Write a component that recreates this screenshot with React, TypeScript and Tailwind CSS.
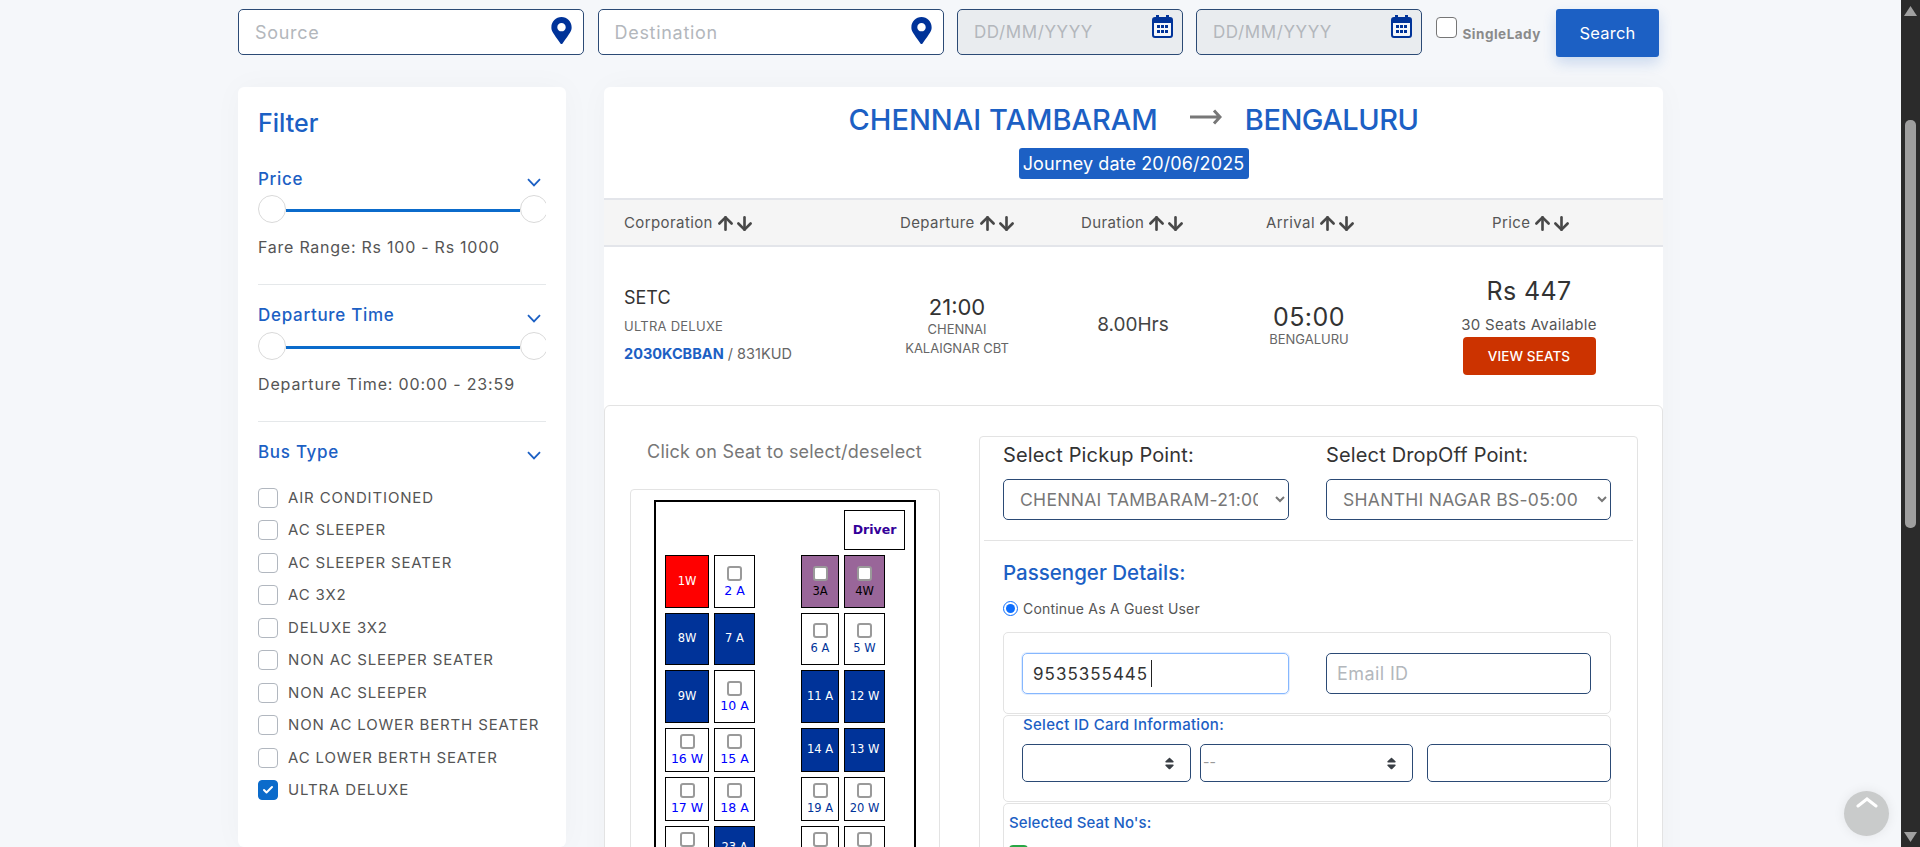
import { ArrowDown, ArrowUp, Check } from "lucide-react";
import { FaMapMarkerAlt, FaSort } from "react-icons/fa";

type SeatKind = "free" | "sold" | "booked" | "lady";

type SeatData = {
	label: string;
	kind: SeatKind;
	small?: boolean;
};

const busTypes = [
	"AIR CONDITIONED",
	"AC SLEEPER",
	"AC SLEEPER SEATER",
	"AC 3X2",
	"DELUXE 3X2",
	"NON AC SLEEPER SEATER",
	"NON AC SLEEPER",
	"NON AC LOWER BERTH SEATER",
	"AC LOWER BERTH SEATER",
	"ULTRA DELUXE",
];

// rows go left pair, then right pair
const seatRows: { height: string; seats: SeatData[] }[] = [
	{
		height: "h-[53px]",
		seats: [
			{ label: "1W", kind: "booked" },
			{ label: "2 A", kind: "free" },
			{ label: "3A", kind: "lady", small: true },
			{ label: "4W", kind: "lady", small: true },
		],
	},
	{
		height: "h-[52px]",
		seats: [
			{ label: "8W", kind: "sold" },
			{ label: "7 A", kind: "sold" },
			{ label: "6 A", kind: "free", small: true },
			{ label: "5 W", kind: "free", small: true },
		],
	},
	{
		height: "h-[53px]",
		seats: [
			{ label: "9W", kind: "sold" },
			{ label: "10 A", kind: "free" },
			{ label: "11 A", kind: "sold" },
			{ label: "12 W", kind: "sold" },
		],
	},
	{
		height: "h-[44px]",
		seats: [
			{ label: "16 W", kind: "free" },
			{ label: "15 A", kind: "free" },
			{ label: "14 A", kind: "sold" },
			{ label: "13 W", kind: "sold" },
		],
	},
	{
		height: "h-[44px]",
		seats: [
			{ label: "17 W", kind: "free" },
			{ label: "18 A", kind: "free" },
			{ label: "19 A", kind: "free", small: true },
			{ label: "20 W", kind: "free", small: true },
		],
	},
	{
		height: "h-[44px]",
		seats: [
			{ label: "24 W", kind: "free" },
			{ label: "23 A", kind: "sold" },
			{ label: "22 A", kind: "free", small: true },
			{ label: "21 W", kind: "free", small: true },
		],
	},
];

function CalendarIcon() {
	return (
		<svg width="21" height="23" viewBox="0 0 21 23" className="absolute right-[10px] top-[6px]">
			<rect x="4" y="0" width="3" height="5" fill="#003399" />
			<rect x="14" y="0" width="3" height="5" fill="#003399" />
			<rect x="1" y="3" width="19" height="19" rx="2" fill="#f4f6fa" stroke="#003399" strokeWidth="2" />
			<rect x="1" y="3" width="19" height="5" fill="#003399" />
			<g fill="#003399">
				<rect x="5" y="10" width="3" height="3" />
				<rect x="9" y="10" width="3" height="3" />
				<rect x="13" y="10" width="3" height="3" />
				<rect x="5" y="15" width="3" height="3" />
				<rect x="9" y="15" width="3" height="3" />
				<rect x="13" y="15" width="3" height="3" />
			</g>
		</svg>
	);
}

function PlaceInput({ placeholder }: { placeholder: string }) {
	return (
		<div className="relative w-[346px]">
			<input
				placeholder={placeholder}
				className="h-[46px] w-full rounded-[5px] border border-[#2b4a75] bg-white pl-[16px] text-[18px] tracking-[0.7px] placeholder:text-[#b3b7bc]"
			/>
			<FaMapMarkerAlt className="absolute right-[9px] top-[8px] text-[#003399]" size={27} />
		</div>
	);
}

function DateInput() {
	return (
		<div className="relative w-[226px]">
			<input
				placeholder="DD/MM/YYYY"
				readOnly
				className="h-[46px] w-full rounded-[5px] border border-[#2b4a75] bg-[#e9ecef] pl-[16px] text-[17px] tracking-[0.6px] placeholder:text-[#b3b7bc]"
			/>
			<CalendarIcon />
		</div>
	);
}

function Chevron() {
	return (
		<svg width="14" height="9" viewBox="0 0 14 9" fill="none" stroke="#1c60c4" strokeWidth="1.8">
			<path d="M1 1.2 L7 7.4 L13 1.2" />
		</svg>
	);
}

function FilterHeading({ title }: { title: string }) {
	return (
		<div className="flex h-[24px] items-center justify-between pr-[5px]">
			<span className="text-[17px] font-medium leading-[24px] tracking-[0.7px] text-[#1c60c4]">{title}</span>
			<span className="mt-[6px] flex">
				<Chevron />
			</span>
		</div>
	);
}

function RangeSlider() {
	return (
		<div className="flex h-[28px] items-center overflow-hidden">
			<span className="h-[28px] w-[28px] shrink-0 rounded-full border border-[#d9d9d9] bg-white" />
			<span className="mt-[2px] h-[3px] flex-1 bg-[#0b6bcb]" />
			<span className="mr-[-2px] h-[28px] w-[28px] shrink-0 rounded-full border border-[#d9d9d9] bg-white" />
		</div>
	);
}

function BusTypeRow({ label, checked }: { label: string; checked: boolean }) {
	return (
		<label className="flex h-[32.5px] items-center">
			<span className="relative flex h-[20px] w-[20px] shrink-0">
				<input
					type="checkbox"
					defaultChecked={checked}
					className="h-[20px] w-[20px] appearance-none rounded-[4px] border border-[#b1b7bf] bg-white checked:border-[#0b6bcb] checked:bg-[#0b6bcb]"
				/>
				{checked && <Check className="absolute left-[4px] top-[4px] text-white" size={12} strokeWidth={4} />}
			</span>
			<span className="ml-[10px] whitespace-nowrap text-[15px] tracking-[0.85px] text-[#555]">{label}</span>
		</label>
	);
}

function SortHead({ label }: { label: string }) {
	return (
		<div className="mt-[1px] flex items-center">
			<span className="text-[15px] tracking-[0.4px] text-[#555]">{label}</span>
			<span className="ml-[3px] flex text-[#484848]">
				<ArrowUp size={21} strokeWidth={3} className="-mx-[1px]" />
				<ArrowDown size={21} strokeWidth={3} className="-mx-[1px]" />
			</span>
		</div>
	);
}

function Seat({ seat }: { seat: SeatData }) {
	const fontSize = seat.small ? "text-[11.5px]" : "text-[12.5px]";
	if (seat.kind === "sold" || seat.kind === "booked") {
		const bg = seat.kind === "booked" ? "bg-[#ff0000]" : "bg-[#003399]";
		return (
			<div className={`flex h-full items-center justify-center border border-black text-[11.5px] text-white ${bg}`}>
				{seat.label}
			</div>
		);
	}
	const bg = seat.kind === "lady" ? "bg-[#996699]" : "bg-white";
	let color = seat.small ? "text-[#003399]" : "text-[#0000ff]";
	if (seat.kind === "lady") color = "text-black";
	return (
		<div className={`flex h-full flex-col items-center justify-center border border-black ${bg}`}>
			<input
				type="checkbox"
				className="h-[15px] w-[15px] shrink-0 appearance-none rounded-[3px] border-2 border-[#9a9a9a] bg-white"
			/>
			<span className={`mt-[3px] leading-[14px] ${fontSize} ${color}`}>{seat.label}</span>
		</div>
	);
}

function SeatMap() {
	return (
		<div className="mt-[25px] h-[400px] w-[310px] rounded-[4px] border border-[#e3e3e3] pl-[23px] pt-[10px]">
			<div className="h-[400px] w-[262px] border-2 border-black pl-[9px] pt-[8px] font-['DejaVu_Sans',sans-serif]">
				<div className="ml-[179px] flex h-[40px] w-[61px] items-center justify-center border border-black text-[12.5px] font-bold text-[#330099]">
					Driver
				</div>
				<div className="mt-[5px] flex flex-col gap-[5px]">
					{seatRows.map((row) => (
						<div
							key={row.seats[0].label}
							className={`grid grid-cols-[44px_41px_36px_38px_41px] gap-x-[5px] ${row.height}`}
						>
							<Seat seat={row.seats[0]} />
							<Seat seat={row.seats[1]} />
							<span />
							<Seat seat={row.seats[2]} />
							<Seat seat={row.seats[3]} />
						</div>
					))}
				</div>
			</div>
		</div>
	);
}

function IdSelect({ width, margin, value }: { width: string; margin: string; value?: string }) {
	return (
		<div className={`relative h-[38px] shrink-0 rounded-[5px] border border-[#2b4a75] bg-white ${width} ${margin}`}>
			{value && <span className="ml-[2px] text-[14px] leading-[34px] text-[#999]">{value}</span>}
			<FaSort className="absolute right-[13px] top-[11px] text-[#3a3f45]" size={15} />
		</div>
	);
}

function PassengerPanel() {
	return (
		<div className="ml-[40px] mt-[30px] h-[500px] w-[659px] rounded-[4px] border border-[#e3e3e3]">
			<div className="px-[23px] pt-[4px]">
				<div className="grid grid-cols-[286px_285px] gap-x-[37px]">
					<span className="text-[20px] leading-[28px] tracking-[0.15px] text-[#333]">Select Pickup Point:</span>
					<span className="text-[20px] leading-[28px] tracking-[0.15px] text-[#333]">Select DropOff Point:</span>
					<select className="mt-[10px] h-[41px] w-full rounded-[5px] border border-[#2b4a75] bg-white pl-[12px] pr-[14px] text-[17.5px] tracking-[0.3px] text-[#777]">
						<option>CHENNAI TAMBARAM-21:00</option>
					</select>
					<select className="mt-[10px] h-[41px] w-full rounded-[5px] border border-[#2b4a75] bg-white pl-[12px] pr-[4px] text-[17.5px] tracking-[0.3px] text-[#777]">
						<option>SHANTHI NAGAR BS-05:00</option>
					</select>
				</div>
			</div>
			<div className="mx-[4px] mt-[20px] h-px bg-[#e3e3e3]" />
			<div className="pl-[23px]">
				<div className="mt-[19px] text-[20.5px] font-medium leading-[26px] text-[#1c60c4]">Passenger Details:</div>
				<label className="mt-[12px] flex h-[20px] items-center">
					<input type="radio" defaultChecked className="m-0 h-[15px] w-[15px] accent-[#0d6efd]" />
					<span className="ml-[5px] mt-[1px] text-[14px] tracking-[0.2px] text-[#555]">Continue As A Guest User</span>
				</label>
				<div className="mt-[14px] flex h-[82px] w-[608px] rounded-[5px] border border-[#e3e3e3] pl-[18px] pt-[20px]">
					<div className="relative h-[41px] w-[267px]">
						<input
							defaultValue="9535355445"
							className="h-full w-full rounded-[5px] border border-[#86b7fe] pl-[10px] text-[17px] tracking-[1px] text-[#333] shadow-[0_0_0_1px_rgba(134,183,254,0.25)]"
						/>
						<span className="absolute left-[129px] top-[7px] h-[27px] w-px bg-[#222]" />
					</div>
					<input
						placeholder="Email ID"
						className="ml-[37px] h-[41px] w-[265px] rounded-[5px] border border-[#2b4a75] pl-[10px] text-[18px] tracking-[0.4px] placeholder:text-[#b3b7bc]"
					/>
				</div>
				<div className="mt-px h-[87px] w-[608px] rounded-[5px] border border-[#e3e3e3]">
					<div className="pl-[19px] text-[15px] font-medium leading-[18px] tracking-[0.3px] text-[#1c60c4]">
						Select ID Card Information:
					</div>
					<div className="mt-[10px] flex">
						<IdSelect width="w-[169px]" margin="ml-[18px]" />
						<IdSelect width="w-[213px]" margin="ml-[9px]" value="--" />
						<input className="ml-[14px] h-[38px] w-[184px] shrink-0 rounded-[5px] border border-[#2b4a75]" />
					</div>
				</div>
				<div className="mt-px h-[100px] w-[608px] rounded-[5px] border border-[#e3e3e3] pl-[5px] pt-[10px]">
					<div className="text-[15px] font-medium leading-[18px] tracking-[0.1px] text-[#1c60c4]">Selected Seat No's:</div>
					<div className="mt-[13px] h-[22px] w-[19px] rounded-[4px] bg-[#28a745]" />
				</div>
			</div>
		</div>
	);
}

function TripRow() {
	return (
		<div className="grid h-[158px] grid-cols-[246px_174px_178px_174px_266px] pl-[20px] text-center">
			<div className="pt-[39px] text-left">
				<div className="text-[18px] leading-[24px] text-[#333]">SETC</div>
				<div className="mt-[6px] text-[13px] leading-[20px] tracking-[0.25px] text-[#666]">ULTRA DELUXE</div>
				<div className="mt-[8px] text-[14.5px] leading-[20px] text-[#666]">
					<span className="font-bold text-[#1c60c4]">2030KCBBAN</span> / 831KUD
				</div>
			</div>
			<div className="pt-[47px]">
				<div className="text-[22px] leading-[26px] text-[#333]">21:00</div>
				<div className="text-[13px] leading-[19px] text-[#666]">CHENNAI</div>
				<div className="text-[13px] leading-[19px] text-[#666]">KALAIGNAR CBT</div>
			</div>
			<div className="pt-[66px] text-[19px] leading-[24px] text-[#444]">8.00Hrs</div>
			<div className="pt-[55px]">
				<div className="text-[25px] leading-[30px] tracking-[0.5px] text-[#333]">05:00</div>
				<div className="text-[13px] leading-[14px] text-[#666]">BENGALURU</div>
			</div>
			<div className="flex flex-col items-center pt-[26px]">
				<div className="text-[25px] leading-[36px] tracking-[0.4px] text-[#333]">Rs 447</div>
				<div className="mt-[6px] text-[15px] leading-[20px] tracking-[0.3px] text-[#555]">30 Seats Available</div>
				<button className="mt-[2px] h-[38px] w-[133px] rounded-[4px] bg-[#cc3300] text-[13.5px] font-medium tracking-[0.1px] text-white">
					VIEW SEATS
				</button>
			</div>
		</div>
	);
}

export default function App() {
	return (
		<div className="flex h-screen overflow-hidden bg-[#f5f7fa] font-[Inter,sans-serif]">
			<main className="relative min-w-0 flex-1 pl-[238px] pt-[9px]">
				<div className="flex items-start gap-x-[13.5px]">
					<PlaceInput placeholder="Source" />
					<PlaceInput placeholder="Destination" />
					<div className="flex gap-x-[13px]">
						<DateInput />
						<DateInput />
					</div>
					<label className="mt-[8px] flex w-[107px] items-start">
						<input
							type="checkbox"
							className="h-[21px] w-[21px] appearance-none rounded-[4px] border border-[#767676] bg-white"
						/>
						<span className="ml-[6px] mt-[8px] whitespace-nowrap text-[13.5px] font-bold leading-[18px] tracking-[0.5px] text-[#8a8a8a]">
							SingleLady
						</span>
					</label>
					<button className="h-[48px] w-[103px] rounded-[3px] bg-[#1c60c4] text-[16.5px] tracking-[0.2px] text-white shadow-[0_6px_14px_rgba(28,96,196,0.2)]">
						Search
					</button>
				</div>

				<div className="mt-[30px] flex items-start gap-x-[38px]">
					<aside className="h-[760px] w-[328px] rounded-[6px] bg-white px-[20px] pt-[21px] shadow-[0_0_30px_rgba(0,0,0,0.03)]">
						<h2 className="text-[25px] font-medium leading-[30px] text-[#1c60c4]">Filter</h2>
						<div className="mt-[29px]">
							<FilterHeading title="Price" />
						</div>
						<div className="mt-[4px]">
							<RangeSlider />
						</div>
						<div className="mt-[12px] text-[16px] leading-[24px] tracking-[0.75px] text-[#555]">Fare Range: Rs 100 - Rs 1000</div>
						<div className="mt-[25px] h-px bg-[#e5e8ea]" />
						<div className="mt-[18px]">
							<FilterHeading title="Departure Time" />
						</div>
						<div className="mt-[5px]">
							<RangeSlider />
						</div>
						<div className="mt-[12px] text-[16px] leading-[24px] tracking-[0.85px] text-[#555]">Departure Time: 00:00 - 23:59</div>
						<div className="mt-[25px] h-px bg-[#e5e8ea]" />
						<div className="mt-[18px]">
							<FilterHeading title="Bus Type" />
						</div>
						<div className="mt-[17.5px]">
							{busTypes.map((type) => (
								<BusTypeRow key={type} label={type} checked={type === "ULTRA DELUXE"} />
							))}
						</div>
					</aside>

					<section className="h-[900px] w-[1059px] rounded-[6px] bg-white shadow-[0_0_30px_rgba(0,0,0,0.03)]">
						<div className="flex h-[53px] items-end justify-center">
							<span className="text-[29px] font-medium leading-[40px] text-[#1c60c4]">CHENNAI TAMBARAM</span>
							<svg width="32" height="16" viewBox="0 0 32 16" fill="none" stroke="#777" strokeWidth="3" className="mb-[15px] ml-[32px] mr-[23px]">
								<path d="M0 8 H30 M24 1.5 L30 8 L24 14.5" />
							</svg>
							<span className="text-[29px] font-medium leading-[40px] tracking-[-0.5px] text-[#1c60c4]">BENGALURU</span>
						</div>
						<div className="mt-[8px] flex justify-center">
							<span className="flex h-[31px] w-[230px] items-center justify-center rounded-[3px] bg-[#1c60c4] text-[18px] tracking-[0.1px] text-white">
								Journey date 20/06/2025
							</span>
						</div>
						<div className="mt-[19px] grid h-[49px] grid-cols-[276px_181px_185px_226px_1fr] items-center border-y-2 border-[#e3e5ea] bg-[#f5f5f5] pl-[20px]">
							<SortHead label="Corporation" />
							<SortHead label="Departure" />
							<SortHead label="Duration" />
							<SortHead label="Arrival" />
							<SortHead label="Price" />
						</div>
						<TripRow />
						<div className="flex h-[500px] items-start rounded-[6px] border border-[#e3e3e3] pl-[25px]">
							<div className="w-[309px] shrink-0 pt-[34px]">
								<div className="text-center text-[18px] leading-[24px] tracking-[0.2px] text-[#777]">
									Click on Seat to select/deselect
								</div>
								<SeatMap />
							</div>
							<PassengerPanel />
						</div>
					</section>
				</div>

				<button className="absolute bottom-[11px] right-[12px] flex h-[45px] w-[45px] items-start justify-center rounded-full bg-[#c9cbcb] pt-[5px] shadow-[0_0_12px_rgba(0,0,0,0.08)]">
					<svg width="22" height="12" viewBox="0 0 22 12" fill="none" stroke="white" strokeWidth="3" strokeLinecap="round">
						<path d="M2 10 L11 3 L20 10" />
					</svg>
				</button>
			</main>

			<div className="flex w-[19px] shrink-0 flex-col items-center bg-[#2b2b2b]">
				<svg width="13" height="10" viewBox="0 0 13 10" fill="#a0a0a0" className="mt-[6px]">
					<path d="M6.5 0 L13 10 H0 Z" />
				</svg>
				<div className="mt-[104px] h-[408px] w-[11px] rounded-[5px] bg-[#9f9f9f]" />
				<svg width="13" height="10" viewBox="0 0 13 10" fill="#a0a0a0" className="mb-[5px] mt-auto">
					<path d="M6.5 10 L13 0 H0 Z" />
				</svg>
			</div>
		</div>
	);
}
